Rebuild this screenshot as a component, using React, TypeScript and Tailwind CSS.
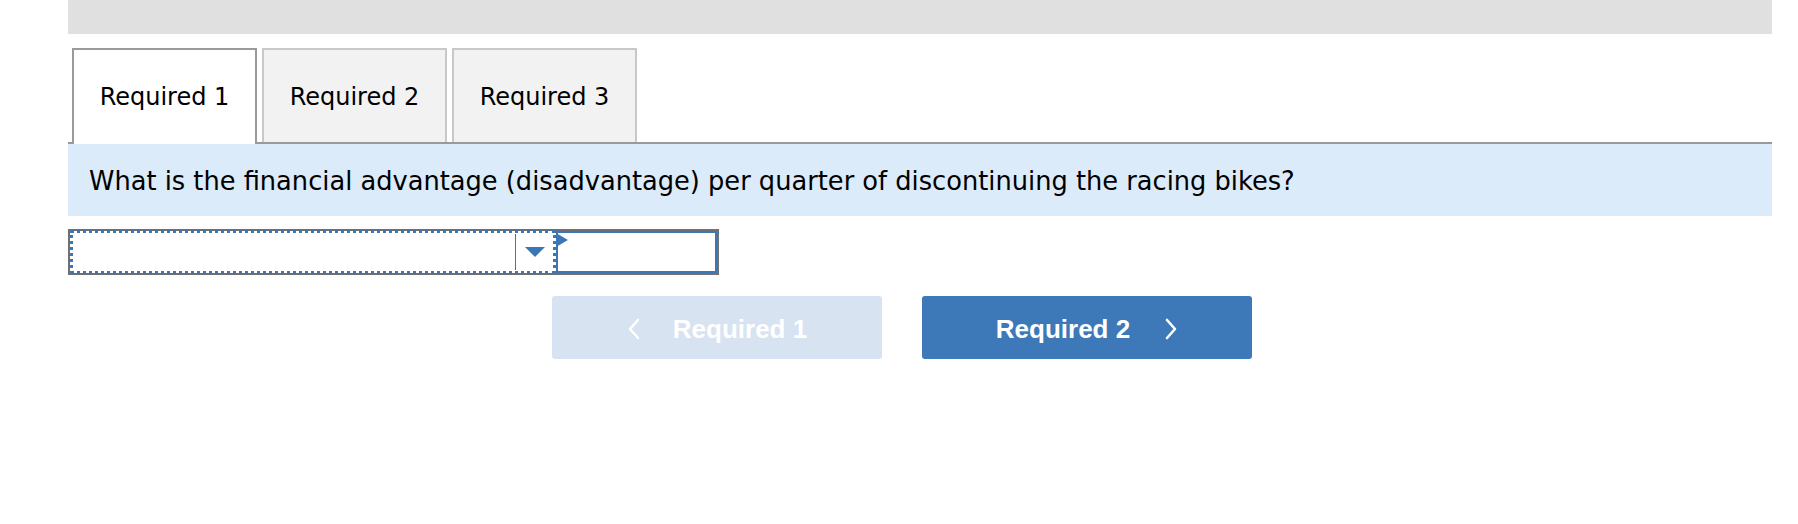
import { useState } from 'react'

type Tab = { id: number; label: string }

const TABS: Tab[] = [
  { id: 1, label: 'Required 1' },
  { id: 2, label: 'Required 2' },
  { id: 3, label: 'Required 3' },
]

function Chevron({ dir }: { dir: 'left' | 'right' }) {
  return (
    <svg width="14" height="22" viewBox="0 0 14 22" fill="none" className="shrink-0">
      <polyline
        points={dir === 'left' ? '11,2 3,11 11,20' : '3,2 11,11 3,20'}
        stroke="currentColor"
        strokeWidth="2.6"
        strokeLinecap="round"
        strokeLinejoin="round"
      />
    </svg>
  )
}

export default function App() {
  const [activo] = useState(1)
  const [valor, setValor] = useState('')

  return (
    <div className="w-[1798px] h-[524px] bg-white font-['DejaVu_Sans',Verdana,sans-serif] text-black">
      <div className="ml-[68px] w-[1704px]">
        <div className="h-[34px] bg-[#e0e0e0]" />

        {/* pestañas */}
        <div className="mt-[14px] flex items-end gap-[5px] pl-[4px] border-b-2 border-[#9a9a9a]">
          {TABS.map((t) =>
            t.id === activo ? (
              <div
                key={t.id}
                className="-mb-[2px] flex h-[96px] w-[185px] items-center justify-center border-2 border-b-0 border-[#9a9a9a] bg-white text-[24px]"
              >
                {t.label}
              </div>
            ) : (
              <div
                key={t.id}
                className="flex h-[94px] w-[185px] items-center justify-center border-2 border-b-0 border-[#c8c8c8] bg-[#f2f2f2] pt-[2px] text-[24px]"
              >
                {t.label}
              </div>
            ),
          )}
        </div>

        <div className="flex h-[72px] items-center bg-[#dbebf9] pl-[21px] pt-[2px] text-[25.7px]">
          What is the financial advantage (disadvantage) per quarter of discontinuing the racing bikes?
        </div>

        {/* fila de respuesta */}
        <div className="mt-[13px] flex h-[46px] w-[651px] border-2 border-[#707070]">
          <div className="-my-[1px] flex w-[486px] border-[3px] border-dotted border-[#3b77b7]">
            <div className="flex-1" />
            <div className="my-[1px] w-[1px] bg-[#3b77b7]" />
            <div className="flex w-[37px] items-center justify-center">
              <svg width="20" height="10" viewBox="0 0 20 10">
                <polygon points="0,0 20,0 10,10" fill="#3b77b7" />
              </svg>
            </div>
          </div>
          <div className="relative flex-1 border-2 border-[#3b77b7]">
            <svg width="12" height="14" viewBox="0 0 12 14" className="absolute -left-[2px] top-[0px]">
              <polygon points="0,0 12,7 0,14" fill="#3b77b7" />
            </svg>
            <input
              value={valor}
              onChange={(e) => setValor(e.target.value)}
              className="h-full w-full bg-transparent px-2 text-[23px] outline-none"
            />
          </div>
        </div>

        {/* navegación */}
        <div className="mt-[21px] flex gap-[40px] pl-[484px] font-['Liberation_Sans',Arial,sans-serif] text-[26px] font-bold text-white">
          <button className="flex h-[63px] w-[330px] items-center justify-center gap-[32px] rounded-[3px] bg-[#d7e3f1] pt-[3px]">
            <Chevron dir="left" />
            <span>Required 1</span>
          </button>
          <button className="flex h-[63px] w-[330px] items-center justify-center gap-[34px] rounded-[3px] bg-[#3d78b8] pt-[3px]">
            <span>Required 2</span>
            <Chevron dir="right" />
          </button>
        </div>
      </div>
    </div>
  )
}
